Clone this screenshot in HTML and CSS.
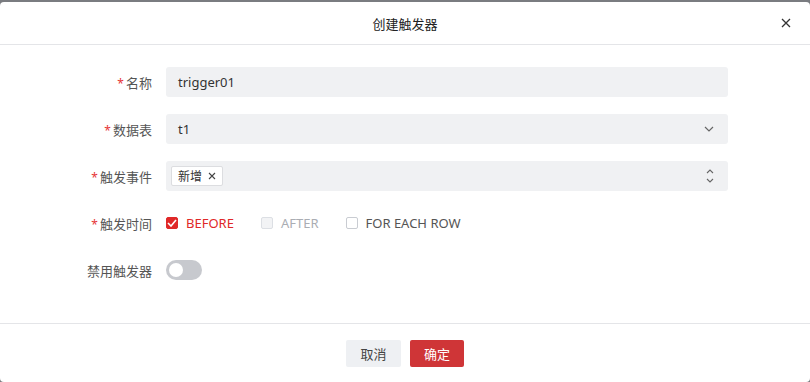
FILE: index.html
```html
<!DOCTYPE html>
<html lang="zh">
<head>
<meta charset="utf-8">
<link rel="stylesheet" href="styles.css">
</head>
<body>
<div class="dialog">
  <div class="header">
    <span class="title">创建触发器</span>
    <span class="close">
      <svg width="10" height="10" viewBox="0 0 10 10"><path d="M1 1L9 9M9 1L1 9" stroke="#333" stroke-width="1.3"/></svg>
    </span>
  </div>
  <div class="body">
    <div class="row">
      <label class="label"><span class="req">*</span>名称</label>
      <div class="input">trigger01</div>
    </div>
    <div class="row">
      <label class="label"><span class="req">*</span>数据表</label>
      <div class="input select">t1
        <svg class="arrow" width="10" height="6" viewBox="0 0 10 6"><path d="M1 1L5 5L9 1" fill="none" stroke="#666" stroke-width="1.2"/></svg>
      </div>
    </div>
    <div class="row">
      <label class="label"><span class="req">*</span>触发事件</label>
      <div class="input select multi">
        <span class="tag">新增<svg width="8" height="8" viewBox="0 0 8 8"><path d="M1 1L7 7M7 1L1 7" stroke="#444" stroke-width="1.1"/></svg></span>
        <svg class="arrow" width="8" height="14" viewBox="0 0 8 14"><path d="M1 4L4 1L7 4M1 10L4 13L7 10" fill="none" stroke="#666" stroke-width="1.1"/></svg>
      </div>
    </div>
    <div class="row">
      <label class="label"><span class="req">*</span>触发时间</label>
      <div class="checks">
        <span class="check checked"><span class="box"><svg width="10" height="8" viewBox="0 0 10 8"><path d="M1 4L4 7L9 1" fill="none" stroke="#fff" stroke-width="1.6"/></svg></span>BEFORE</span>
        <span class="check disabled"><span class="box"></span>AFTER</span>
        <span class="check"><span class="box"></span>FOR EACH ROW</span>
      </div>
    </div>
    <div class="row">
      <label class="label">禁用触发器</label>
      <span class="switch"><span class="knob"></span></span>
    </div>
  </div>
  <div class="footer">
    <button class="btn cancel">取消</button>
    <button class="btn ok">确定</button>
  </div>
</div>
</body>
</html>
```
FILE: styles.css
```css
html, body { margin: 0; padding: 0; }
body {
  background: #7a7c80;
  width: 810px;
  height: 382px;
  overflow: hidden;
  font-family: "Noto Sans", "Noto Sans CJK SC", sans-serif;
  font-size: 13px;
  color: #333;
}
.dialog {
  margin-top: 2px;
  height: 380px;
  background: #fff;
  border-radius: 4px;
  display: flex;
  flex-direction: column;
}
.header {
  height: 42px;
  flex: none;
  border-bottom: 1px solid #e4e5e8;
  display: flex;
  align-items: center;
  justify-content: center;
  position: relative;
}
.title { font-size: 13px; color: #222; }
.close {
  position: absolute;
  right: 19px;
  top: 16px;
  display: flex;
}
.body {
  flex: 1;
  padding-top: 22px;
  display: flex;
  flex-direction: column;
  gap: 17px;
}
.row {
  display: flex;
  align-items: center;
  height: 30px;
}
.label {
  width: 152px;
  text-align: right;
  padding-right: 14px;
  color: #555;
  font-size: 13px;
}
.req { color: #e63737; margin-right: 2px; font-size: 12px; }
.input {
  width: 562px;
  height: 30px;
  box-sizing: border-box;
  background: #f0f1f3;
  border-radius: 3px;
  padding: 0 12px;
  display: flex;
  align-items: center;
  color: #333;
  position: relative;
}
.select .arrow { position: absolute; right: 14px; top: 50%; transform: translateY(-50%); }
.multi { padding-left: 5px; }
.tag {
  background: #fff;
  border: 1px solid #dcdde0;
  border-radius: 2px;
  height: 20px;
  box-sizing: border-box;
  padding: 0 6px;
  display: inline-flex;
  align-items: center;
  gap: 6px;
  font-size: 12px;
  color: #333;
}
.checks { display: flex; align-items: center; gap: 27px; margin-top: -1px; }
.check { display: inline-flex; align-items: center; gap: 8px; color: #555; }
.box {
  width: 12px; height: 12px;
  box-sizing: border-box;
  border: 1px solid #c9ccd2;
  border-radius: 2px;
  background: #fff;
  display: inline-flex;
  align-items: center;
  justify-content: center;
}
.checked { color: #e02828; }
.checked .box { background: #e02828; border-color: #e02828; }
.disabled { color: #aaadb3; }
.disabled .box { background: #f2f3f5; border-color: #dcdfe4; }
.switch {
  width: 36px; height: 20px;
  border-radius: 10px;
  background: #c7c9ce;
  display: inline-flex;
  align-items: center;
  padding-left: 3px;
  box-sizing: border-box;
  margin-top: -1px;
}
.knob { width: 14px; height: 14px; border-radius: 50%; background: #fff; }
.footer {
  height: 58px;
  flex: none;
  border-top: 1px solid #e4e5e8;
  display: flex;
  align-items: center;
  justify-content: center;
  gap: 9px;
}
.btn {
  border: none;
  height: 27px;
  width: 55px;
  border-radius: 2px;
  font-family: inherit;
  font-size: 13px;
  padding: 0;
}
.cancel { background: #eef0f3; color: #444; }
.ok { background: #cf3537; color: #fff; width: 54px; }
```
